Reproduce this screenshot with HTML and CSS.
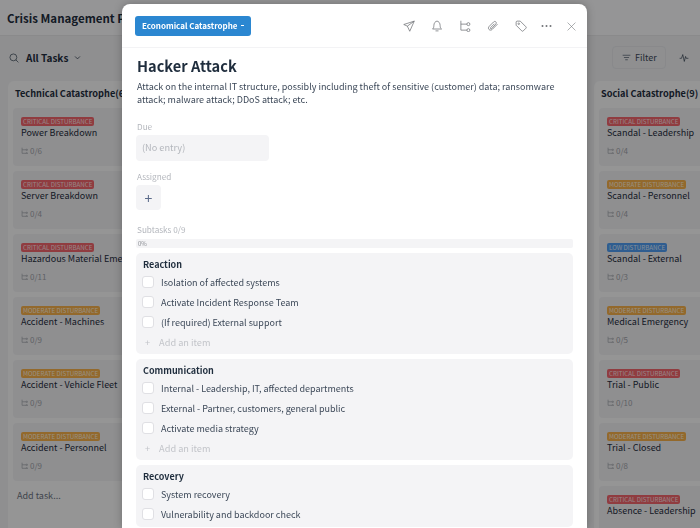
FILE: index.html
```html
<!DOCTYPE html>
<html lang="en">
<head>
  <meta charset="UTF-8">
  <title>Crisis Management Plan</title>
  <link rel="stylesheet" href="styles.css">
</head>
<body>

  <header class="topbar">
    <h1>Crisis Management Plan</h1>
  </header>

  <div class="toolbar">
    <div class="toolbar-left">
      <svg class="icon search-icon" viewBox="0 0 16 16"><circle cx="7" cy="7" r="5.500"/><path d="M11 11l4 4"/></svg>
      <span class="view-name">All Tasks</span>
      <svg class="icon caret-icon" viewBox="0 0 10 10"><path d="M1.500 3.500L5 7l3.500-3.500"/></svg>
    </div>
    <div class="toolbar-right">
      <button class="filter-btn">
        <svg class="icon" viewBox="0 0 14 14"><path d="M1 3.500h12M3 7h8M5 10.500h4"/></svg>
        Filter
      </button>
      <svg class="icon pulse-icon" viewBox="0 0 16 16"><path d="M1 8.500h3l2-6 2.500 11 2-8 1 3h3.500"/></svg>
    </div>
  </div>

  <main class="board">
    <section class="column">
      <h2>Technical Catastrophe(6)</h2>
      <div class="card"><span class="tag critical">CRITICAL DISTURBANCE</span><p>Power Breakdown</p><div class="count"><svg class="icon" viewBox="0 0 10 10"><path d="M1.500 1v8h6M1.500 4h6"/><circle cx="8.300" cy="4" r="1"/><circle cx="8.300" cy="9" r="1"/></svg>0/6</div></div>
      <div class="card"><span class="tag critical">CRITICAL DISTURBANCE</span><p>Server Breakdown</p><div class="count"><svg class="icon" viewBox="0 0 10 10"><path d="M1.500 1v8h6M1.500 4h6"/><circle cx="8.300" cy="4" r="1"/><circle cx="8.300" cy="9" r="1"/></svg>0/4</div></div>
      <div class="card"><span class="tag critical">CRITICAL DISTURBANCE</span><p>Hazardous Material Emergency</p><div class="count"><svg class="icon" viewBox="0 0 10 10"><path d="M1.500 1v8h6M1.500 4h6"/><circle cx="8.300" cy="4" r="1"/><circle cx="8.300" cy="9" r="1"/></svg>0/11</div></div>
      <div class="card"><span class="tag moderate">MODERATE DISTURBANCE</span><p>Accident - Machines</p><div class="count"><svg class="icon" viewBox="0 0 10 10"><path d="M1.500 1v8h6M1.500 4h6"/><circle cx="8.300" cy="4" r="1"/><circle cx="8.300" cy="9" r="1"/></svg>0/9</div></div>
      <div class="card"><span class="tag moderate">MODERATE DISTURBANCE</span><p>Accident - Vehicle Fleet</p><div class="count"><svg class="icon" viewBox="0 0 10 10"><path d="M1.500 1v8h6M1.500 4h6"/><circle cx="8.300" cy="4" r="1"/><circle cx="8.300" cy="9" r="1"/></svg>0/9</div></div>
      <div class="card"><span class="tag moderate">MODERATE DISTURBANCE</span><p>Accident - Personnel</p><div class="count"><svg class="icon" viewBox="0 0 10 10"><path d="M1.500 1v8h6M1.500 4h6"/><circle cx="8.300" cy="4" r="1"/><circle cx="8.300" cy="9" r="1"/></svg>0/9</div></div>
      <div class="add-task">Add task...</div>
    </section>

    <section class="column"></section>

    <section class="column">
      <h2>Social Catastrophe(9)</h2>
      <div class="card"><span class="tag critical">CRITICAL DISTURBANCE</span><p>Scandal - Leadership</p><div class="count"><svg class="icon" viewBox="0 0 10 10"><path d="M1.500 1v8h6M1.500 4h6"/><circle cx="8.300" cy="4" r="1"/><circle cx="8.300" cy="9" r="1"/></svg>0/4</div></div>
      <div class="card"><span class="tag moderate">MODERATE DISTURBANCE</span><p>Scandal - Personnel</p><div class="count"><svg class="icon" viewBox="0 0 10 10"><path d="M1.500 1v8h6M1.500 4h6"/><circle cx="8.300" cy="4" r="1"/><circle cx="8.300" cy="9" r="1"/></svg>0/4</div></div>
      <div class="card"><span class="tag low">LOW DISTURBANCE</span><p>Scandal - External</p><div class="count"><svg class="icon" viewBox="0 0 10 10"><path d="M1.500 1v8h6M1.500 4h6"/><circle cx="8.300" cy="4" r="1"/><circle cx="8.300" cy="9" r="1"/></svg>0/3</div></div>
      <div class="card"><span class="tag moderate">MODERATE DISTURBANCE</span><p>Medical Emergency</p><div class="count"><svg class="icon" viewBox="0 0 10 10"><path d="M1.500 1v8h6M1.500 4h6"/><circle cx="8.300" cy="4" r="1"/><circle cx="8.300" cy="9" r="1"/></svg>0/5</div></div>
      <div class="card"><span class="tag critical">CRITICAL DISTURBANCE</span><p>Trial - Public</p><div class="count"><svg class="icon" viewBox="0 0 10 10"><path d="M1.500 1v8h6M1.500 4h6"/><circle cx="8.300" cy="4" r="1"/><circle cx="8.300" cy="9" r="1"/></svg>0/10</div></div>
      <div class="card"><span class="tag moderate">MODERATE DISTURBANCE</span><p>Trial - Closed</p><div class="count"><svg class="icon" viewBox="0 0 10 10"><path d="M1.500 1v8h6M1.500 4h6"/><circle cx="8.300" cy="4" r="1"/><circle cx="8.300" cy="9" r="1"/></svg>0/8</div></div>
      <div class="card"><span class="tag critical">CRITICAL DISTURBANCE</span><p>Absence - Leadership</p></div>
    </section>
  </main>

  <div class="overlay"></div>

  <div class="modal">
    <div class="modal-head">
      <button class="stage-btn">Economical Catastrophe <span class="stage-caret"></span></button>
      <div class="modal-actions">
        <svg class="icon" viewBox="0 0 16 16"><path d="M15 1.500L1 6l4.800 2.200L9 15zM15 1.500L5.800 8.200" stroke-linejoin="round"/></svg>
        <svg class="icon" viewBox="0 0 16 16"><path d="M2 12c1.300-1 1.800-2.200 1.800-4.500C3.800 4 6 1.500 8 1.500s4.200 2.500 4.200 6c0 2.300.5 3.500 1.800 4.500zM6 14.500h4" stroke-linejoin="round"/></svg>
        <svg class="icon" viewBox="0 0 16 16"><path d="M2.500 1v12.500h8M2.500 5.500h8"/><circle cx="12.500" cy="5.500" r="2"/><circle cx="12.500" cy="13.500" r="2"/></svg>
        <svg class="icon" viewBox="0 0 16 16"><path d="M14 5.500l-7 7c-1.300 1.300-3.200 1.300-4.300.2s-1-3 .3-4.300l5.800-5.800c.9-.9 2.200-.9 3-.1s.8 2.100-.1 3L6.300 11.400c-.5.500-1.100.5-1.500.1s-.4-1 .1-1.500l5-5"/></svg>
        <svg class="icon" viewBox="0 0 16 16"><path d="M1.500 3q0-1.500 1.500-1.500h4l7.500 7.500q1 1 0 2l-3.500 3.500q-1 1-2 0L1.500 7z" stroke-linejoin="round"/><circle cx="5" cy="5" r="1"/></svg>
        <svg class="icon dots" viewBox="0 0 11 12"><circle cx="1.500" cy="6" r="1"/><circle cx="5.500" cy="6" r="1"/><circle cx="9.500" cy="6" r="1"/></svg>
        <svg class="icon close-icon" viewBox="0 0 16 16"><path d="M1 1l14 14M15 1L1 15"/></svg>
      </div>
    </div>

    <div class="modal-body">
      <h3>Hacker Attack</h3>
      <p class="desc">Attack on the internal IT structure, possibly including theft of sensitive (customer) data; ransomware attack; malware attack; DDoS attack; etc.</p>

      <div class="label due-label">Due</div>
      <div class="due-box">(No entry)</div>

      <div class="label assigned-label">Assigned</div>
      <button class="assign-btn">+</button>

      <div class="label subtasks-label">Subtasks 0/9</div>
      <div class="progress">0%</div>

      <div class="group">
        <h4>Reaction</h4>
        <label class="item"><span class="check"></span>Isolation of affected systems</label>
        <label class="item"><span class="check"></span>Activate Incident Response Team</label>
        <label class="item"><span class="check"></span>(If required) External support</label>
        <div class="add-item"><span>+</span>Add an item</div>
      </div>

      <div class="group">
        <h4>Communication</h4>
        <label class="item"><span class="check"></span>Internal - Leadership, IT, affected departments</label>
        <label class="item"><span class="check"></span>External - Partner, customers, general public</label>
        <label class="item"><span class="check"></span>Activate media strategy</label>
        <div class="add-item"><span>+</span>Add an item</div>
      </div>

      <div class="group">
        <h4>Recovery</h4>
        <label class="item"><span class="check"></span>System recovery</label>
        <label class="item"><span class="check"></span>Vulnerability and backdoor check</label>
      </div>
    </div>
  </div>

</body>
</html>
```

FILE: styles.css
```css
/* --- Base --- */
html, body {
  height: 100%;
}

body {
  margin: 0;
  overflow: hidden;
  background-color: #eeeff1;
  color: #1f2d3d;
  font-family: "Noto Sans CJK SC", "Noto Sans", sans-serif;
  font-size: 9px;
}

h1, h2, h3, h4, p {
  margin: 0;
}

button {
  font-family: inherit;
}

.icon {
  display: block;
  flex: none;
  width: 16px;
  height: 16px;
  fill: none;
  stroke: currentColor;
  stroke-width: 1;
}

/* --- Board behind the dialog --- */
.topbar {
  display: flex;
  align-items: center;
  height: 35px;
  padding-left: 7px;
  border-bottom: 1px solid #e6e6e8;
  background-color: #f9f9fa;
}

.topbar h1 {
  font-size: 11.500px;
  font-weight: 700;
  white-space: nowrap;
}

.toolbar {
  display: flex;
  justify-content: space-between;
  align-items: center;
  height: 45px;
  padding: 0 11px 2px 9px;
  box-sizing: border-box;
}

.toolbar-left {
  display: flex;
  align-items: center;
}

.search-icon {
  width: 10px;
  height: 10px;
  margin-right: 7px;
}

.view-name {
  font-size: 10px;
  font-weight: 700;
}

.caret-icon {
  width: 7px;
  height: 7px;
  margin-left: 6px;
}

.toolbar-right {
  display: flex;
  align-items: center;
  gap: 13px;
}

.filter-btn {
  display: flex;
  align-items: center;
  gap: 4px;
  width: 54px;
  height: 23px;
  padding: 0 0 0 9px;
  box-sizing: border-box;
  border: 1px solid #e4e4e8;
  border-radius: 4px;
  background: none;
  color: #3c4858;
  font-size: 9px;
}

.filter-btn .icon {
  width: 9px;
  height: 9px;
}

.pulse-icon {
  width: 10px;
  height: 10px;
}

.board {
  display: flex;
  gap: 8px;
  padding-left: 8px;
}

.column {
  flex: 0 0 285px;
  box-sizing: border-box;
  padding: 5px 5px 0;
  border-radius: 6px;
  background-color: #f8f8f9;
}

.column h2 {
  height: 22px;
  padding-left: 2px;
  font-size: 9.200px;
  font-weight: 700;
  line-height: 14px;
  white-space: nowrap;
}

.card {
  box-sizing: border-box;
  height: 58px;
  margin-bottom: 5px;
  padding: 9px 8px 0;
  border-radius: 4px;
  background-color: #efeff1;
}

.card p {
  font-size: 9px;
  line-height: 13px;
  white-space: nowrap;
}

.tag {
  display: block;
  width: fit-content;
  height: 9px;
  padding: 0 2px;
  border-radius: 2px;
  color: rgba(255, 255, 255, 0.8);
  font-size: 6.200px;
  line-height: 9px;
}

.tag.critical {
  background-color: #f0646c;
}

.tag.moderate {
  background-color: #f5b04a;
}

.tag.low {
  background-color: #4f9cf0;
}

.count {
  display: flex;
  align-items: center;
  gap: 2px;
  margin-top: 6px;
  color: #9ea2a9;
  font-size: 8px;
}

.count .icon {
  width: 7px;
  height: 7px;
}

.add-task {
  padding: 3px 4px 8px;
  color: #6b7280;
  font-size: 9px;
}

.overlay {
  position: fixed;
  inset: 0;
  background-color: rgba(0, 0, 0, 0.4);
  backdrop-filter: blur(0.5px);
}

/* --- Dialog --- */
.modal {
  position: fixed;
  top: 4px;
  left: 122px;
  width: 465px;
  bottom: 0;
  overflow: hidden;
  border-radius: 8px 8px 0 0;
  background-color: #fff;
  box-shadow: 0 0 8px rgba(0, 0, 0, 0.25);
}

.modal-head {
  display: flex;
  justify-content: space-between;
  align-items: center;
  height: 43px;
  padding: 0 11px 0 13px;
  border-bottom: 1px solid #f3f3f5;
}

.stage-btn {
  display: flex;
  align-items: center;
  gap: 4px;
  width: 116px;
  height: 20px;
  padding: 0 0 0 7px;
  border: none;
  border-radius: 3px;
  background-color: #2b87d1;
  color: #fff;
  font-size: 8px;
  font-weight: 700;
  white-space: nowrap;
}

.stage-caret {
  width: 3px;
  height: 1px;
  background-color: #fff;
}

.modal-actions {
  display: flex;
  align-items: center;
  gap: 16px;
  color: #6f7276;
}

.modal-actions .icon {
  width: 12px;
  height: 12px;
}

.modal-actions .dots {
  width: 11px;
  margin: 0 -1px 0 -2px;
  stroke: none;
  fill: currentColor;
}

.modal-actions .close-icon {
  width: 9px;
  height: 9px;
  margin-top: 1px;
}

.modal-body {
  padding: 7px 14px 0;
}

.modal-body h3 {
  padding-left: 1px;
  font-size: 14.600px;
  font-weight: 700;
  line-height: 22px;
}

.desc {
  margin-top: 3px;
  padding-left: 1px;
  color: #3c4858;
  font-size: 9px;
  line-height: 13px;
}

.label {
  padding-left: 1px;
  color: #b4b7bd;
  font-size: 8.200px;
  line-height: 12px;
}

.due-label {
  margin-top: 14px;
}

.due-box {
  width: 133px;
  height: 26px;
  margin-top: 3px;
  padding-left: 6px;
  box-sizing: border-box;
  border-radius: 4px;
  background-color: #f4f4f6;
  color: #b4b7bd;
  font-size: 9.200px;
  line-height: 25px;
}

.assigned-label {
  margin-top: 9px;
}

.assign-btn {
  display: block;
  width: 25px;
  height: 25px;
  margin-top: 3px;
  padding: 0;
  border: none;
  border-radius: 4px;
  background-color: #f4f4f6;
  color: #5b6b8a;
  font-size: 14px;
}

.subtasks-label {
  margin-top: 13px;
}

.progress {
  height: 9px;
  margin-top: 4px;
  padding-left: 2px;
  border-radius: 2px;
  background-color: #f4f4f6;
  color: #8a8d93;
  font-size: 6px;
  line-height: 9px;
}

.group {
  margin-top: 5px;
  padding: 5px 6px 3px;
  border-radius: 5px;
  background-color: #f4f4f6;
}

.group h4 {
  padding-left: 1px;
  font-size: 9px;
  font-weight: 700;
  line-height: 14px;
}

.item {
  display: flex;
  align-items: center;
  gap: 7px;
  height: 20px;
  color: #3c4858;
  font-size: 9px;
}

.check {
  box-sizing: border-box;
  width: 12px;
  height: 12px;
  border: 1px solid #e0e0e4;
  border-radius: 3px;
  background-color: #fff;
}

.add-item {
  display: flex;
  align-items: center;
  gap: 9px;
  height: 19px;
  padding-left: 3px;
  color: #c2c4c9;
  font-size: 9.200px;
}
```
